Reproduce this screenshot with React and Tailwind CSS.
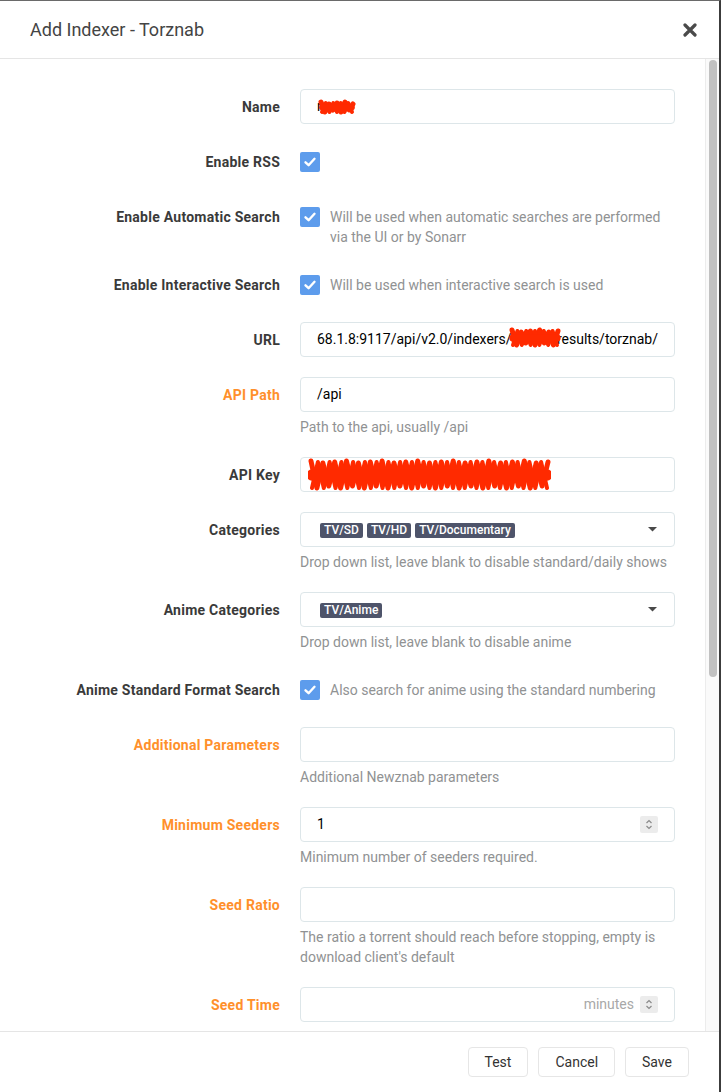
import React from "react";

function Scribble({ w, h, n }) {
  const pts = [];
  for (let i = 0; i <= n; i++) {
    const x = 3 + ((w - 6) * i) / n;
    const y = i % 2 === 0 ? 3 + (i % 3) : h - 3 - (i % 4);
    pts.push(`${x.toFixed(1)},${y.toFixed(1)}`);
  }
  const pts2 = [];
  for (let i = 0; i <= n; i++) {
    const x = 4 + ((w - 8) * i) / n;
    const y = i % 2 === 0 ? h - 4 : 4;
    pts2.push(`${x.toFixed(1)},${y.toFixed(1)}`);
  }
  return (
    <svg width={w} height={h} viewBox={`0 0 ${w} ${h}`} className="block">
      <polyline points={pts.join(" ")} fill="none" stroke="#ff2a00" strokeWidth="5" strokeLinecap="round" strokeLinejoin="round" />
      <polyline points={pts2.join(" ")} fill="none" stroke="#ff2a00" strokeWidth="4" strokeLinecap="round" strokeLinejoin="round" />
      <path d={`M4 ${h / 2} L${w - 4} ${h / 2}`} stroke="#ff2a00" strokeWidth={Math.max(3, h / 3)} strokeLinecap="round" />
    </svg>
  );
}

function Label({ children, orange }) {
  return (
    <div
      className={`w-[250px] h-[35px] shrink-0 mr-[20px] text-right text-[14px] font-bold tracking-[0.25px] leading-[37px] ${
        orange ? "text-[#ff902b]" : "text-[#3a3a3a]"
      }`}
    >
      {children}
    </div>
  );
}

function Help({ children }) {
  return <div className="mt-[5px] text-[14px] leading-[20px] text-[#909293]">{children}</div>;
}

function Check({ help }) {
  return (
    <div className="flex items-start pt-[8px] min-h-[35px]">
      <div className="w-[20px] h-[20px] shrink-0 rounded-[2px] bg-[#5d9cec] flex items-center justify-center">
        <svg width="14" height="14" viewBox="0 0 14 14">
          <polyline points="2.5,7.3 5.6,10.2 11.5,3.8" fill="none" stroke="white" strokeWidth="2.4" strokeLinecap="round" strokeLinejoin="round" />
        </svg>
      </div>
      {help && <div className="ml-[10px] text-[14px] leading-[20px] text-[#909293]">{help}</div>}
    </div>
  );
}

const inputCls =
  "relative h-[35px] border border-[#dde6e9] rounded-[4px] px-[16px] flex items-center text-[14px] text-black";

function Spinner() {
  return (
    <div className="w-[18px] h-[17px] shrink-0 bg-[#ececec] rounded-[2px] flex flex-col items-center justify-center">
      <svg width="10" height="13" viewBox="0 0 10 13">
        <polyline points="2.5,5 5,2.5 7.5,5" fill="none" stroke="#8a8a8a" strokeWidth="1.2" />
        <polyline points="2.5,8 5,10.5 7.5,8" fill="none" stroke="#8a8a8a" strokeWidth="1.2" />
      </svg>
    </div>
  );
}

function Caret() {
  return (
    <svg width="9" height="5" viewBox="0 0 9 5" className="shrink-0">
      <polygon points="0,0 9,0 4.5,4.5" fill="#4a4a4a" />
    </svg>
  );
}

function Tag({ children }) {
  return (
    <span className="inline-block h-[15px] px-[4px] rounded-[2px] bg-[#4e546a] text-white text-[12px] font-medium leading-[15px]">
      {children}
    </span>
  );
}

function Group({ label, orange, children }) {
  return (
    <div className="flex mb-[20px]">
      <Label orange={orange}>{label}</Label>
      <div className="flex-1 min-w-0">{children}</div>
    </div>
  );
}

export default function App() {
  return (
    <div className="w-[721px] h-[1092px] flex flex-col bg-white border-t border-t-[#6a6a6a] border-r-2 border-r-[#3c3c3c] font-['Roboto',sans-serif] overflow-hidden">
      <header className="h-[58px] shrink-0 flex items-center justify-between pl-[30px] pr-[22px] border-b border-[#e5e5e5]">
        <h1 className="text-[18px] text-[#444] leading-none">Add Indexer - Torznab</h1>
        <svg width="14" height="14" viewBox="0 0 14 14">
          <path d="M2 2 L12 12 M12 2 L2 12" stroke="#4a4a4a" strokeWidth="3.2" strokeLinecap="round" />
        </svg>
      </header>

      <div className="flex-1 flex min-h-0">
        <div className="flex-1 overflow-hidden pt-[30px] px-[30px]">
          <Group label="Name">
            <div className={inputCls}>
              <span>rc</span>
              <div className="absolute left-[17px] top-[9px]">
                <Scribble w={38} h={17} n={8} />
              </div>
            </div>
          </Group>

          <Group label="Enable RSS">
            <Check />
          </Group>

          <Group label="Enable Automatic Search">
            <Check help="Will be used when automatic searches are performed via the UI or by Sonarr" />
          </Group>

          <Group label="Enable Interactive Search">
            <Check help="Will be used when interactive search is used" />
          </Group>

          <Group label="URL">
            <div className={inputCls + " whitespace-nowrap overflow-hidden"}>
              <span>68.1.8:9117/api/v2.0/indexers/</span>
              <span className="relative inline-block w-[44px] text-[#ff2a00]">
                abcd
                <span className="absolute left-[-3px] top-[-2px]">
                  <Scribble w={52} h={22} n={10} />
                </span>
              </span>
              <span>/results/torznab/</span>
            </div>
          </Group>

          <Group label="API Path" orange>
            <div className={inputCls}>/api</div>
            <Help>Path to the api, usually /api</Help>
          </Group>

          <Group label="API Key">
            <div className={inputCls}>
              <div className="absolute left-[7px] top-[0px]">
                <Scribble w={243} h={34} n={40} />
              </div>
            </div>
          </Group>

          <Group label="Categories">
            <div className={inputCls + " justify-between pl-[19px] pr-[17px]"}>
              <div className="flex gap-[4px] pt-[1px]">
                <Tag>TV/SD</Tag>
                <Tag>TV/HD</Tag>
                <Tag>TV/Documentary</Tag>
              </div>
              <Caret />
            </div>
            <Help>Drop down list, leave blank to disable standard/daily shows</Help>
          </Group>

          <Group label="Anime Categories">
            <div className={inputCls + " justify-between pl-[19px] pr-[17px]"}>
              <div className="flex gap-[4px] pt-[1px]">
                <Tag>TV/Anime</Tag>
              </div>
              <Caret />
            </div>
            <Help>Drop down list, leave blank to disable anime</Help>
          </Group>

          <Group label="Anime Standard Format Search">
            <Check help="Also search for anime using the standard numbering" />
          </Group>

          <Group label="Additional Parameters" orange>
            <div className={inputCls}></div>
            <Help>Additional Newznab parameters</Help>
          </Group>

          <Group label="Minimum Seeders" orange>
            <div className={inputCls + " justify-between"}>
              <span>1</span>
              <Spinner />
            </div>
            <Help>Minimum number of seeders required.</Help>
          </Group>

          <Group label="Seed Ratio" orange>
            <div className={inputCls}></div>
            <Help>The ratio a torrent should reach before stopping, empty is download client's default</Help>
          </Group>

          <Group label="Seed Time" orange>
            <div className={inputCls + " justify-end gap-[6px]"}>
              <span className="text-[#a8a8a8]">minutes</span>
              <Spinner />
            </div>
          </Group>
        </div>

        <div className="w-[14px] shrink-0 border-l border-[#ececec] bg-[#fafafa] pt-[1px]">
          <div className="ml-[3px] w-[8px] h-[617px] rounded-full bg-[#c1c1c1]"></div>
        </div>
      </div>

      <footer className="h-[61px] shrink-0 border-t border-[#e5e5e5] flex justify-end items-center gap-[10px] pr-[30px]">
        {["Test", "Cancel", "Save"].map((t) => (
          <button
            key={t}
            className="h-[30px] px-[16px] border border-[#e6e6e6] rounded-[4px] bg-white text-[14px] text-[#333]"
          >
            {t}
          </button>
        ))}
      </footer>
    </div>
  );
}
